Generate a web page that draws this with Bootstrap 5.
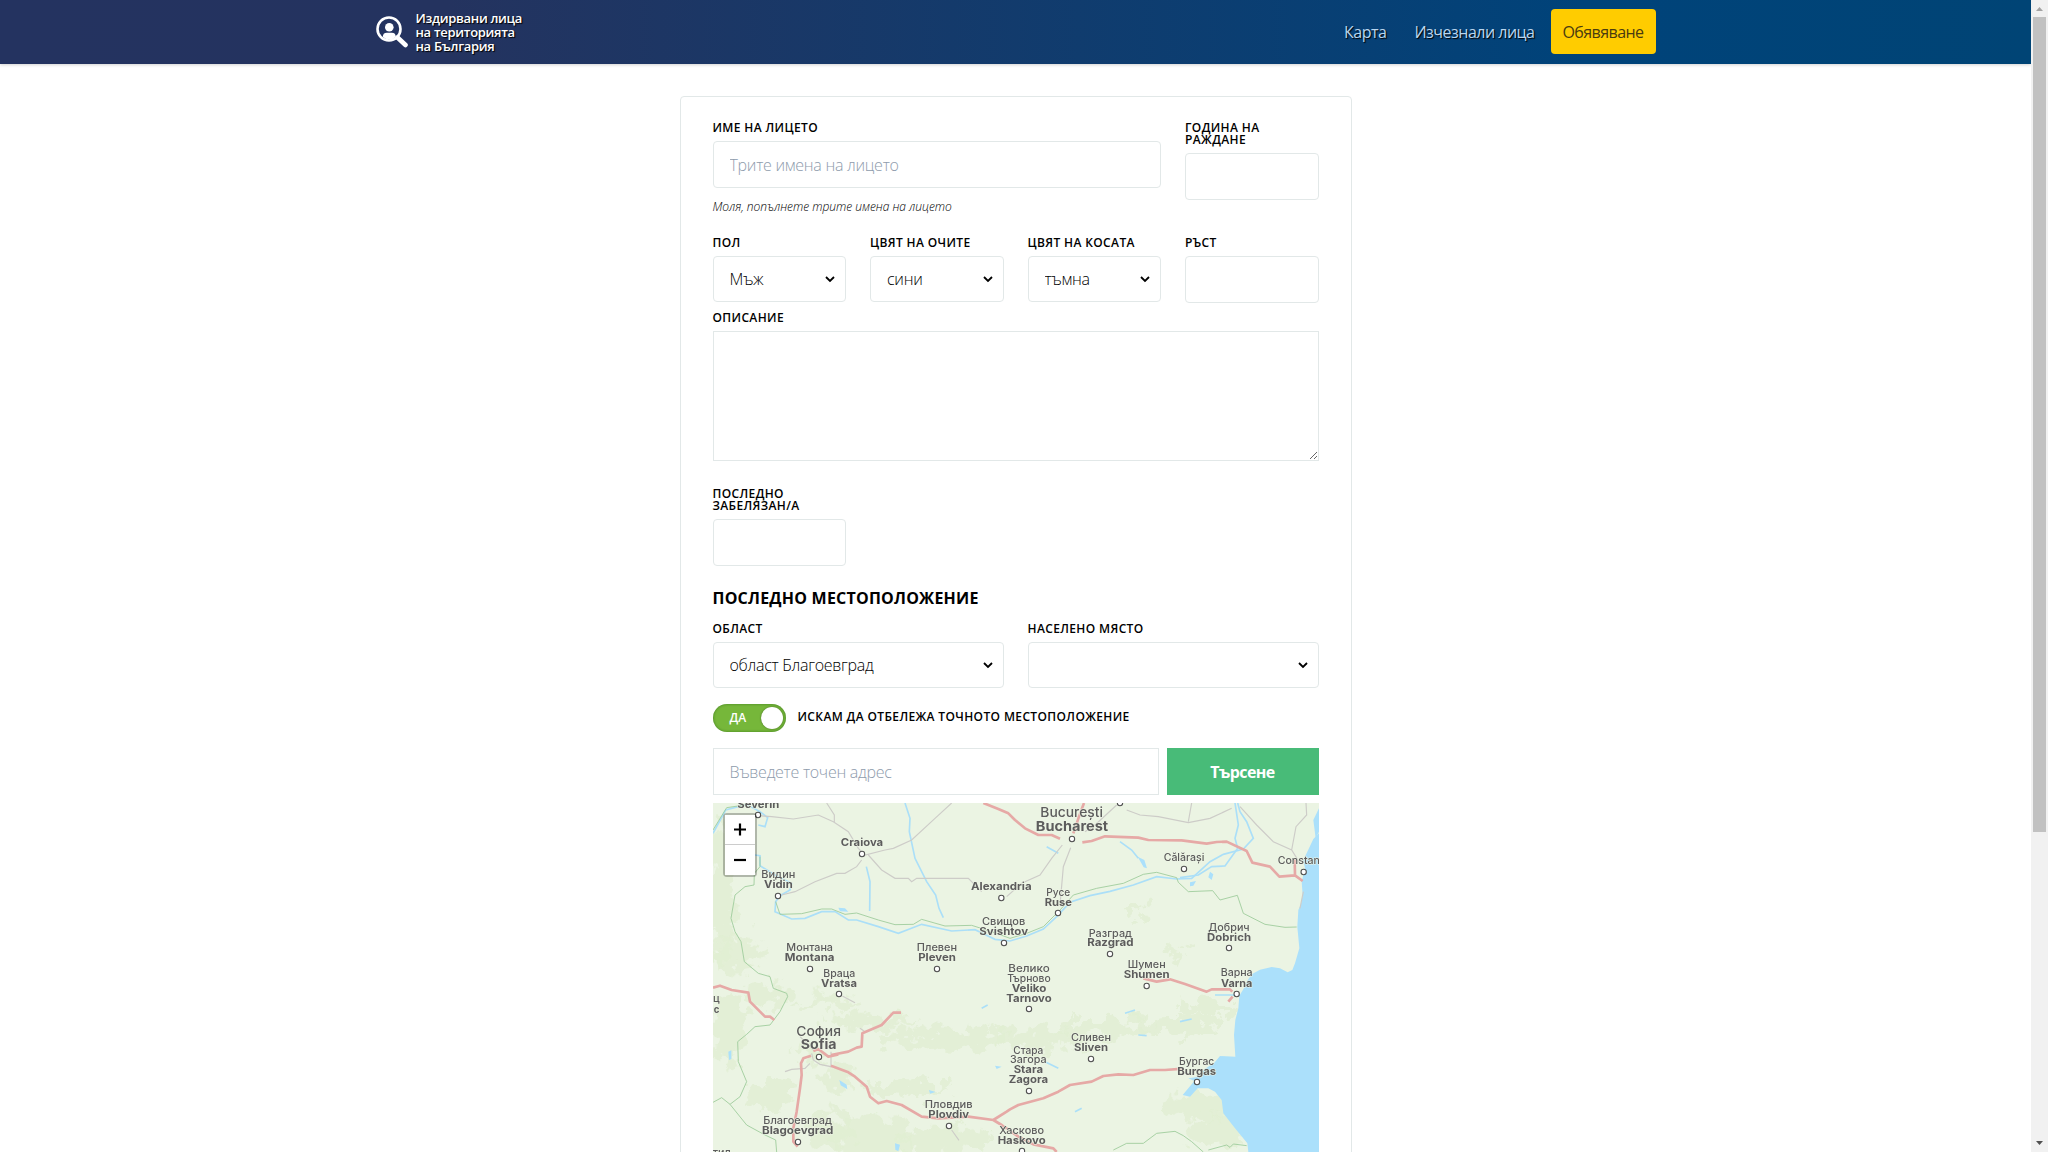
<!DOCTYPE html>
<html lang="bg">
<head>
<meta charset="utf-8">
<meta name="viewport" content="width=device-width, initial-scale=1">
<title>Издирвани лица на територията на България</title>
<link href="https://cdn.jsdelivr.net/npm/bootstrap@5.3.0/dist/css/bootstrap.min.css" rel="stylesheet">
<style>
html,body{height:100%}
body{font-family:"Open Sans","Noto Sans",sans-serif;font-weight:300;color:#000;background:#fff;overflow:hidden}
.page-view{min-width:0;overflow:hidden}
.site-bar{height:64px;background:linear-gradient(90deg,#243360 0%,#24335f 22%,#00437a 78%,#004475 100%);box-shadow:0 1px 3px rgba(0,0,0,.18)}
.site-wrap{width:1280px}
.site-name{font-size:13px;line-height:14px;font-weight:600;color:#fff;letter-spacing:-.3px;text-shadow:1px 1px 1px #000;margin-left:8px;margin-bottom:1px}
.site-link{color:#b9d6ef;font-size:16px;line-height:24px;text-decoration:none;text-shadow:1px 1px 1px #000;font-weight:400;letter-spacing:-.5px}
.site-link.first{margin-right:28px}
.site-cta{background:#fc0;color:#4a3b10;width:105px;height:45px;border-radius:4px;font-size:16px;letter-spacing:-.55px;text-decoration:none;font-weight:400;margin-bottom:2px;padding-top:2px}
.report{width:672px;height:1300px;margin-top:32px;border:1px solid #e2e8e8;border-radius:4px;padding:24px 32px}
.cap{display:block;font-size:12px;line-height:12px;font-weight:600;text-transform:uppercase;letter-spacing:.37px;padding-top:1px;margin-bottom:7px;white-space:nowrap}
.report .form-control,.report .form-select{height:47px;border:1px solid #e2e8e8;border-radius:4px;padding:0 16px;font-size:16px;font-weight:300;color:#000;letter-spacing:-.27px}
.report .form-select{height:46px;background-image:url("data:image/svg+xml,%3Csvg xmlns='http://www.w3.org/2000/svg' viewBox='0 0 10 7'%3E%3Cpath d='M1 1l4 4 4-4' fill='none' stroke='%23000' stroke-width='1.8'/%3E%3C/svg%3E");background-size:10px 7px;background-position:right 10px center}
.report .form-control::placeholder{color:#8e9bac;opacity:1}
.report textarea.form-control{height:130px;border-radius:0;resize:vertical}
.report .square{border-radius:0}
.hint{font-size:12px;line-height:18px;font-style:italic;margin-top:10px;letter-spacing:-.02px}
.row-people{height:115px}
.row-seen{margin-top:26px}
.section-name{font-size:16px;line-height:24px;font-weight:700;letter-spacing:.22px;margin:20px 0 12px;text-transform:uppercase}
.switch-pill{width:73px;height:28px;border-radius:14px;background:#76b73a;box-shadow:inset 0 0 3px rgba(0,60,0,.45);color:#fff;font-size:12px;font-weight:600;padding:0 3px 0 17px}
.switch-knob{width:22px;height:22px;border-radius:50%;background:#fff;box-shadow:0 0 2px rgba(0,0,0,.4)}
.find-btn{width:152px;height:47px;border:0;border-radius:0;background:#48bb78;color:#fff;font-weight:700;font-size:16px;letter-spacing:-.6px}
.map-box{height:460px;margin-top:8px}
.map-box svg.canvas{display:block}
.map-zoom{left:10px;top:10px;width:34px;border:2px solid rgba(0,0,0,.25);border-radius:4px;background-clip:padding-box}
.map-zoom svg{display:block;width:30px;height:29px;background:#fff}
.map-zoom svg+svg{border-top:1px solid #ccc;height:31px}
.scroller{width:17px;background:#f1f1f1}
.scroller .thumb{width:13px;height:815px;background:#c1c1c1}
.roads path{fill:none;stroke:#e6a9a6;stroke-width:8;stroke-linejoin:round}
.minor path{fill:none;stroke:#cdccc8;stroke-width:3.5}
.streams path{fill:none;stroke:#abdff8;stroke-width:5}
.borders path{fill:none;stroke:#9ccb9a;stroke-width:2.6}
.woods ellipse{fill:#e0edd2;opacity:.75}
.names{font-family:Inter,"Noto Sans",sans-serif;font-weight:700;fill:#5c5c5c;text-anchor:middle;stroke:#eef5e6;stroke-width:3;paint-order:stroke}
.names .cy{font-weight:500}
.dots circle{fill:#fff;stroke:#505050;stroke-width:3.2}
</style>
</head>
<body class="d-flex">
<div class="page-view flex-grow-1">
<header class="site-bar">
 <div class="site-wrap mx-auto h-100 d-flex align-items-center">
  <svg width="32" height="32" viewBox="0 0 32 32" aria-hidden="true"><circle cx="13" cy="13" r="11.500" fill="none" stroke="#fff" stroke-width="2.600"/><circle cx="13.300" cy="11.300" r="4.300" fill="#fff"/><path d="M6.800 21q0-4.300 4-4.300h5q4 0 4 4.300-6.500 5-13 0z" fill="#fff"/><path d="M21.500 21.500l8 7.500" stroke="#fff" stroke-width="4.600" stroke-linecap="round"/></svg>
  <div class="site-name">Издирвани лица<br>на територията<br>на България</div>
  <nav class="ms-auto d-flex align-items-center">
   <a class="site-link first" href="#">Карта</a>
   <a class="site-link me-3" href="#">Изчезнали лица</a>
   <a class="site-cta d-flex align-items-center justify-content-center" href="#">Обявяване</a>
  </nav>
 </div>
</header>
<main class="report mx-auto">
 <div class="row row-people">
  <div class="col-9"><label class="cap">Име на лицето</label><input class="form-control" placeholder="Трите имена на лицето"><div class="hint">Моля, попълнете трите имена на лицето</div></div>
  <div class="col-3"><label class="cap">Година на<br>раждане</label><input class="form-control"></div>
 </div>
 <div class="row">
  <div class="col-3"><label class="cap">Пол</label><select class="form-select"><option>Мъж</option></select></div>
  <div class="col-3"><label class="cap">Цвят на очите</label><select class="form-select"><option>сини</option></select></div>
  <div class="col-3"><label class="cap">Цвят на косата</label><select class="form-select"><option>тъмна</option></select></div>
  <div class="col-3"><label class="cap">Ръст</label><input class="form-control"></div>
 </div>
 <label class="cap mt-2">Описание</label>
 <textarea class="form-control"></textarea>
 <div class="row row-seen">
  <div class="col-3"><label class="cap">Последно<br>забелязан/а</label><input class="form-control"></div>
 </div>
 <h2 class="section-name">Последно местоположение</h2>
 <div class="row">
  <div class="col-6"><label class="cap">Област</label><select class="form-select"><option>област Благоевград</option></select></div>
  <div class="col-6"><label class="cap">Населено място</label><select class="form-select"><option></option></select></div>
 </div>
 <div class="d-flex align-items-center my-3">
  <div class="switch-pill d-flex align-items-center justify-content-between"><span>ДА</span><span class="switch-knob"></span></div>
  <span class="cap ms-2 ps-1 mb-0 pb-1">Искам да отбележа точното местоположение</span>
 </div>
 <div class="d-flex gap-2"><input class="form-control square flex-fill" placeholder="Въведете точен адрес"><button class="find-btn flex-shrink-0">Търсене</button></div>
 <div class="map-box position-relative">
  <svg class="canvas" width="606" height="349" viewBox="24 24 1818 1047" aria-label="Карта">
   <defs><filter id="ragged" x="-10%" y="-10%" width="120%" height="120%"><feTurbulence type="fractalNoise" baseFrequency=".025" numOctaves="4" seed="7"/><feDisplacementMap in="SourceGraphic" scale="110" xChannelSelector="R" yChannelSelector="G"/><feGaussianBlur stdDeviation="2"/></filter></defs>
   <rect x="24" y="24" width="1818" height="1047" fill="#ebf4e3"/>
   <g class="woods" filter="url(#ragged)">
    <ellipse cx="50" cy="300" rx="40" ry="230"/><ellipse cx="100" cy="480" rx="80" ry="50"/><ellipse cx="190" cy="600" rx="70" ry="34"/><ellipse cx="70" cy="700" rx="50" ry="110"/><ellipse cx="370" cy="620" rx="100" ry="18"/><ellipse cx="500" cy="680" rx="140" ry="24"/><ellipse cx="720" cy="735" rx="190" ry="32"/><ellipse cx="1010" cy="735" rx="140" ry="34"/><ellipse cx="1200" cy="700" rx="150" ry="26"/><ellipse cx="1420" cy="690" rx="130" ry="30"/><ellipse cx="1500" cy="640" rx="90" ry="22"/><ellipse cx="600" cy="880" rx="130" ry="22"/><ellipse cx="400" cy="850" rx="50" ry="38"/><ellipse cx="200" cy="900" rx="70" ry="45"/><ellipse cx="370" cy="1010" rx="70" ry="60"/><ellipse cx="500" cy="1020" rx="120" ry="60"/><ellipse cx="720" cy="1040" rx="130" ry="45"/><ellipse cx="1480" cy="930" rx="110" ry="40"/><ellipse cx="1540" cy="1010" rx="90" ry="50"/><ellipse cx="1290" cy="345" rx="35" ry="15"/><ellipse cx="1410" cy="470" rx="30" ry="15"/><ellipse cx="310" cy="780" rx="50" ry="25"/>
   </g>
   <g fill="#abe0fb">
    <path d="M1842 115L1825 132 1812 160 1795 195 1800 220 1790 260 1793 300 1787 330 1780 345 1777 395 1783 460 1770 505 1762 525 1748 532 1725 520 1700 516 1665 524 1640 538 1628 556 1615 583 1603 602 1600 640 1591 675 1587 720 1591 785 1545 783 1528 803 1495 825 1483 845 1450 850 1468 858 1433 900 1455 905 1478 880 1510 880 1530 890 1550 915 1555 955 1590 1000 1627 1045 1630 1071H1842z"/>
    <path d="M1842 40L1825 75 1832 130 1842 110zM400 338l20 2 10 10-25-1zM403 855l22 14 2 14-20-12zM70 770l9-4v26l-7 3zM1298 185l20 10 8 25-10-3zM1515 230l10 8-5 17-10-8zM1455 262l18-4-8 14-10 2zM570 1045l15 4-5 20-9-5zM672 885l20 6-17 5zM870 812l20 3-15 7z"/>
   </g>
   <g class="streams">
    <path d="M24 115L62 45 125 28 165 50 188 68 180 95 160 90M150 180L165 182 165 212 210 240 260 265 255 285 225 302 212 320 210 350 260 372 300 370 350 350 390 350 430 375 455 375 520 395 580 415 650 388 740 408 810 404 870 433 915 438 965 423 1015 402 1055 365 1095 322 1155 302 1215 289 1285 270 1355 245 1415 252 1460 250 1515 200 1555 178 1615 162 1645 130 1625 80 1605 50 1598 24"/>
    <path d="M600 24L615 70 613 110 630 190 665 260 692 300 702 340 715 368M1425 248L1480 240 1520 215 1560 213 1598 160 1590 130 1600 90 1590 24M484 215L495 260 494 348" stroke-width="4"/>
    <path d="M1245 140L1280 165 1300 190M1025 155L1060 175M1260 655L1290 645M1425 680L1460 672M1020 800L1060 820M1110 950L1130 940M1300 720L1325 722M830 640l18-10M1530 600l60 0" stroke-width="4"/>
   </g>
   <g class="borders">
    <path d="M24 105L65 38 120 30M165 185L165 215 148 235 147 270 120 275 90 300 78 370 90 410 108 440 118 500 160 535 195 545 205 580 245 595 248 605 225 650 195 690 150 695 125 718 98 740 100 800 125 860 105 905 75 928 50 908 24 922M75 928L125 990 180 1020 212 1035 215 1071M212 320L225 358 290 356 350 342 380 342 420 358 455 354 520 375 570 389 625 388 650 373 720 393 800 391 860 410 915 430 965 415 1015 395 1065 345 1105 300 1175 280 1255 265 1315 238 1355 232 1415 248 1420 262 1450 290 1523 287 1545 315 1597 301 1615 355 1680 388 1740 397 1775 396M1225 1065L1265 1045 1315 1045 1355 1015 1410 1009 1435 1022 1460 1040 1495 1071M1510 1065L1565 1050 1575 1057 1585 1047 1625 1052"/>
   </g>
   <g class="minor">
    <path d="M160 62L200 65 265 72 340 60 385 80 430 110 460 160 480 180 540 165 565 160 620 135 690 70 740 24M365 24L388 60 388 82M470 195L455 215 420 235 395 235 330 260 270 290 230 300M490 180L530 225 570 250 610 250 620 260 635 250 790 250 830 290M905 305L950 265 1005 240 1040 190 1072 150M1097 158L1075 215 1065 330M1235 30L1170 90 1140 110M1265 45L1305 60 1360 65 1450 83 1515 70 1580 40M1605 35L1655 90 1705 140 1760 165 1785 205M1760 165L1773 95 1805 60 1803 24M1460 24L1450 80M412 603L450 623M320 775L325 795 345 808 378 815 378 770M240 830L260 823 300 820 315 805M285 725L325 765M740 1005L762 1036M465 700L480 710M1795 290L1785 340"/>
   </g>
   <g class="roads">
    <path d="M24 578L45 572 80 585 130 593 135 620 165 650 180 665 195 665 208 675M835 24L880 42 910 55 930 75 960 100 1000 120 1040 120 1065 131M1137 24L1122 65 1105 115"/>
    <path d="M1132 142L1160 138 1200 124 1300 128 1330 135 1430 136 1505 146 1535 141 1565 140 1625 168 1642 203 1695 215 1723 245 1770 241 1793 258M1769 190L1770 240"/>
    <path d="M378 780L430 770 455 758 470 755 472 715 530 690 565 653 588 653M378 812L430 832 450 845 485 875 495 905 520 925 545 918 590 930 650 965 700 970 790 965 865 975 905 950 915 943 940 930 1015 910 1060 890 1095 870 1160 860 1195 843 1240 838 1285 840 1335 825 1380 825 1435 821M865 975L890 990 940 1025 985 1048 1045 1060 1055 1071M318 782L295 790 288 805 290 840 285 880 275 950 265 1000 265 1040 278 1055M325 768L340 762 370 785 400 778M1315 550L1355 560 1395 553 1440 567 1505 590 1520 583 1575 583 1582 590M1583 605L1570 620"/>
   </g>
   <g class="dots"><circle cx="159" cy="60" r="8"/><circle cx="471" cy="177" r="8"/><circle cx="219" cy="303" r="8"/><circle cx="889" cy="309" r="8"/><circle cx="897" cy="444" r="8"/><circle cx="315" cy="522" r="8"/><circle cx="696" cy="522" r="8"/><circle cx="1101" cy="132" r="8"/><circle cx="1245" cy="24" r="8"/><circle cx="1437" cy="222" r="8"/><circle cx="1796" cy="231" r="8"/><circle cx="1059" cy="354" r="8"/><circle cx="1215" cy="477" r="8"/><circle cx="1572" cy="459" r="8"/><circle cx="402" cy="597" r="8"/><circle cx="342" cy="786" r="8"/><circle cx="732" cy="993" r="8"/><circle cx="279" cy="1041" r="8"/><circle cx="972" cy="642" r="8"/><circle cx="1325" cy="573" r="8"/><circle cx="1595" cy="597" r="8"/><circle cx="1158" cy="792" r="8"/><circle cx="972" cy="888" r="8"/><circle cx="1476" cy="861" r="8"/><circle cx="951" cy="1068" r="8"/></g>
   <g class="names" id="names"></g>
  </svg>
  <div class="map-zoom position-absolute">
   <svg viewBox="0 0 30 29"><path d="M9 14.500h12M15 8.500v12" stroke="#000" stroke-width="2.200"/></svg>
   <svg viewBox="0 0 30 30"><path d="M9 15h12" stroke="#000" stroke-width="2.200"/></svg>
  </div>
 </div>
</main>
</div>
<div class="scroller flex-shrink-0 d-flex flex-column align-items-center justify-content-between">
 <div><svg class="d-block mx-auto" width="13" height="17" viewBox="0 0 13 17"><path d="M3 11h7L6.500 7z" fill="#a3a3a3"/></svg><div class="thumb"></div></div>
 <svg width="13" height="17" viewBox="0 0 13 17"><path d="M3 6h7L6.500 10z" fill="#505050"/></svg>
</div>
<script src="https://cdn.jsdelivr.net/npm/bootstrap@5.3.0/dist/js/bootstrap.bundle.min.js"></script>
<script>
// Place names: text, centre x, baseline y, width, size, regular weight
const places=[
["Severin",160,36,126,32],["Craiova",471,152,127,32],["Видин",220,247,102,32,1],["Vidin",220,277,86,32],
["Alexandria",889,283,182,32],["Свищов",896,389,130,32,1],["Svishtov",896,419,146,32],
["Монтана",314,466,140,32,1],["Montana",314,495,149,32],["Плевен",696,466,121,32,1],["Pleven",696,495,113,32],
["București",1100,64,188,40,1],["Bucharest",1101,105,217,40],["Călărași",1437,197,122,32,1],
["Constanța",1796,205,156,32,1],["Русе",1060,300,72,32,1],["Ruse",1060,330,82,32],
["Разград",1216,423,130,32,1],["Razgrad",1216,452,139,32],["Добрич",1572,406,124,32,1],["Dobrich",1572,436,132,32],
["Велико",972,530,124,31,1],["Търново",972,558,130,31,1],["Veliko",972,589,104,32],["Tarnovo",972,619,136,32],
["Шумен",1325,518,114,32,1],["Shumen",1325,548,138,32],["Варна",1595,542,96,32,1],["Varna",1595,573,94,32],
["Враца",403,543,96,32,1],["Vratsa",402,573,108,32],["ц",34,619,20,32,1],["c",35,651,17,32],
["София",341,720,134,40,1],["Sofia",341,761,107,40],["Сливен",1158,737,120,32,1],["Sliven",1158,767,102,32],
["Стара",970,775,90,31,1],["Загора",970,803,110,31,1],["Stara",970,833,88,32],["Zagora",970,863,118,32],
["Бургас",1475,808,106,32,1],["Burgas",1475,837,117,32],["Благоевград",278,985,206,32,1],["Blagoevgrad",278,1015,214,32],
["Пловдив",731,936,144,32,1],["Plovdiv",731,966,122,32],["Хасково",950,1014,134,32,1],["Haskovo",950,1044,144,32],["тил",50,1082,54,32,1]];
const layer=document.getElementById("names");
for(const [name,x,y,w,size,regular] of places){
 const t=document.createElementNS("http://www.w3.org/2000/svg","text");
 t.setAttribute("x",x);t.setAttribute("y",y+1.5);t.setAttribute("textLength",w);t.setAttribute("lengthAdjust","spacingAndGlyphs");
 t.setAttribute("font-size",size);if(regular)t.setAttribute("class","cy");
 t.textContent=name;layer.appendChild(t);
}
</script>
</body>
</html>
